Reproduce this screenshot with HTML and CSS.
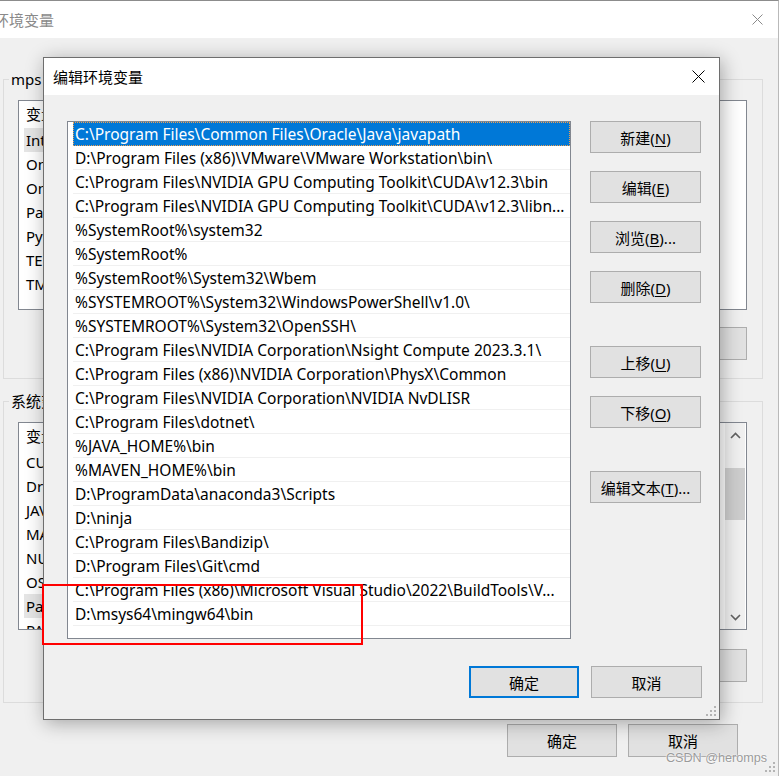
FILE: index.html
```html
<!DOCTYPE html>
<html lang="zh-CN">
<head>
<meta charset="utf-8">
<title>编辑环境变量</title>
<link rel="stylesheet" href="styles.css">
</head>
<body>
<div class="bgwin">
  <div class="bg-title">
    <span class="bg-title-text">环境变量</span>
    <svg class="bg-close" width="11" height="11" viewBox="0 0 11 11"><path d="M0.5 0.5 L10.5 10.5 M10.5 0.5 L0.5 10.5" stroke="#8a8a8a" stroke-width="1" fill="none"/></svg>
  </div>
  <div class="bg-body">
    <fieldset class="group">
      <legend>mps 的用户变量(U)</legend>
      <div class="vlist v1">
        <div class="vhead">变量</div>
        <div class="vrow hl">IntelliJ IDEA</div>
        <div class="vrow">OneDrive</div>
        <div class="vrow">OneDriveConsumer</div>
        <div class="vrow">Path</div>
        <div class="vrow">PyCharm</div>
        <div class="vrow">TEMP</div>
        <div class="vrow">TMP</div>
      </div>
      <div class="group-btns">
        <button class="btn gbtn">新建(N)...</button>
        <button class="btn gbtn">编辑(E)...</button>
        <button class="btn gbtn">删除(D)</button>
      </div>
    </fieldset>
    <fieldset class="group g2">
      <legend>系统变量(S)</legend>
      <div class="vlist v2">
        <div class="vcol">
          <div class="vhead">变量</div>
          <div class="vrow">CUDA_PATH</div>
          <div class="vrow">DriverData</div>
          <div class="vrow">JAVA_HOME</div>
          <div class="vrow">MAVEN_HOME</div>
          <div class="vrow">NUMBER_OF_PROCESSORS</div>
          <div class="vrow">OS</div>
          <div class="vrow hl">Path</div>
          <div class="vrow">PATHEXT</div>
        </div>
        <div class="vscroll">
          <svg class="chev" width="11" height="7" viewBox="0 0 11 7"><path d="M1 6 L5.5 1.5 L10 6" stroke="#606060" stroke-width="1.6" fill="none"/></svg>
          <div class="thumb-track"><div class="thumb"></div></div>
          <svg class="chev" width="11" height="7" viewBox="0 0 11 7"><path d="M1 1 L5.5 5.5 L10 1" stroke="#606060" stroke-width="1.6" fill="none"/></svg>
        </div>
      </div>
      <div class="group-btns g2btns">
        <button class="btn gbtn">新建(W)...</button>
        <button class="btn gbtn">编辑(I)...</button>
        <button class="btn gbtn">删除(L)</button>
      </div>
    </fieldset>
    <div class="bg-foot">
      <button class="btn fbtn">确定</button>
      <button class="btn fbtn">取消</button>
    </div>
  </div>
  <svg class="grip bg-grip" width="10" height="10" viewBox="0 0 10 10"><g fill="#b4b4b4"><rect x="8" y="0" width="2" height="2"/><rect x="4" y="4" width="2" height="2"/><rect x="8" y="4" width="2" height="2"/><rect x="0" y="8" width="2" height="2"/><rect x="4" y="8" width="2" height="2"/><rect x="8" y="8" width="2" height="2"/></g></svg>
</div>

<div class="dlg">
  <div class="dlg-title">
    <span>编辑环境变量</span>
    <svg class="dlg-close" width="13" height="13" viewBox="0 0 13 13"><path d="M0.5 0.5 L12.5 12.5 M12.5 0.5 L0.5 12.5" stroke="#000" stroke-width="1" fill="none"/></svg>
  </div>
  <div class="dlg-body">
    <div class="plist">
      <div class="prow sel">C:\Program Files\Common Files\Oracle\Java\javapath</div>
      <div class="prow">D:\Program Files (x86)\VMware\VMware Workstation\bin\</div>
      <div class="prow">C:\Program Files\NVIDIA GPU Computing Toolkit\CUDA\v12.3\bin</div>
      <div class="prow">C:\Program Files\NVIDIA GPU Computing Toolkit\CUDA\v12.3\libn...</div>
      <div class="prow">%SystemRoot%\system32</div>
      <div class="prow">%SystemRoot%</div>
      <div class="prow">%SystemRoot%\System32\Wbem</div>
      <div class="prow">%SYSTEMROOT%\System32\WindowsPowerShell\v1.0\</div>
      <div class="prow">%SYSTEMROOT%\System32\OpenSSH\</div>
      <div class="prow">C:\Program Files\NVIDIA Corporation\Nsight Compute 2023.3.1\</div>
      <div class="prow">C:\Program Files (x86)\NVIDIA Corporation\PhysX\Common</div>
      <div class="prow">C:\Program Files\NVIDIA Corporation\NVIDIA NvDLISR</div>
      <div class="prow">C:\Program Files\dotnet\</div>
      <div class="prow">%JAVA_HOME%\bin</div>
      <div class="prow">%MAVEN_HOME%\bin</div>
      <div class="prow">D:\ProgramData\anaconda3\Scripts</div>
      <div class="prow">D:\ninja</div>
      <div class="prow">C:\Program Files\Bandizip\</div>
      <div class="prow">D:\Program Files\Git\cmd</div>
      <div class="prow">C:\Program Files (x86)\Microsoft Visual Studio\2022\BuildTools\V...</div>
      <div class="prow">D:\msys64\mingw64\bin</div>
    </div>
    <div class="pbtns">
      <button class="btn pbtn">新建(<u>N</u>)</button>
      <button class="btn pbtn">编辑(<u>E</u>)</button>
      <button class="btn pbtn">浏览(<u>B</u>)...</button>
      <button class="btn pbtn">删除(<u>D</u>)</button>
      <button class="btn pbtn sep">上移(<u>U</u>)</button>
      <button class="btn pbtn">下移(<u>O</u>)</button>
      <button class="btn pbtn sep">编辑文本(<u>T</u>)...</button>
    </div>
  </div>
  <div class="dlg-foot">
    <button class="btn dbtn ok">确定</button>
    <button class="btn dbtn">取消</button>
  </div>
  <svg class="grip dlg-grip" width="10" height="10" viewBox="0 0 10 10"><g fill="#b4b4b4"><rect x="8" y="0" width="2" height="2"/><rect x="4" y="4" width="2" height="2"/><rect x="8" y="4" width="2" height="2"/><rect x="0" y="8" width="2" height="2"/><rect x="4" y="8" width="2" height="2"/><rect x="8" y="8" width="2" height="2"/></g></svg>
</div>

<div class="redbox"></div>
<div class="watermark">CSDN @heromps</div>
</body>
</html>
```

FILE: styles.css
```css
html, body {
  margin: 0;
  padding: 0;
}
body {
  width: 779px;
  height: 776px;
  overflow: hidden;
  position: relative;
  font-family: "Noto Sans", "Noto Sans CJK SC", sans-serif;
  font-size: 15px;
  color: #000;
  background: #f0f0f0;
}

/* ---------- background window ---------- */
.bgwin {
  width: 779px;
  height: 776px;
  box-sizing: border-box;
  border-top: 1px solid #8c8c8c;
  border-right: 1px solid #b9b9b9;
  background: #f0f0f0;
  display: flex;
  flex-direction: column;
  position: relative;
}
.bg-title {
  height: 37px;
  flex: none;
  background: #fff;
  display: flex;
  align-items: center;
  justify-content: space-between;
}
.bg-title-text {
  margin-left: -6px;
  color: #8a8a8a;
  font-size: 15px;
}
.bg-close {
  margin-right: 15px;
}
.bg-body {
  flex: 1;
  padding: 31px 15px 0 3px;
}
.group {
  margin: 0;
  border: 1px solid #dcdcdc;
  padding: 11px 14px 18px 14px;
  min-width: 0;
}
.group legend {
  margin-left: -9px;
  padding: 0 2px;
  font-size: 15px;
  line-height: 20px;
}
.g2 {
  margin-top: 12px;
  padding-bottom: 20px;
}
.vlist {
  box-sizing: border-box;
  border: 1px solid #828790;
  background: #fff;
  overflow: hidden;
  margin-right: 1px;
}
.v1 {
  height: 210px;
}
.v2 {
  height: 208px;
  display: flex;
}
.vcol {
  flex: 1;
}
.vhead {
  height: 27px;
  line-height: 27px;
  padding-left: 7px;
}
.vrow {
  height: 24px;
  line-height: 24px;
  margin-left: 5px;
  padding-left: 2px;
  width: 220px;
}
.vrow.hl {
  background: #e5e5e5;
}
.vscroll {
  width: 20px;
  margin-right: 1px;
  background: #f0f0f0;
  display: flex;
  flex-direction: column;
  align-items: center;
}
.chev {
  margin: 9px 0 8px;
  flex: none;
}
.thumb-track {
  flex: 1;
  align-self: stretch;
}
.thumb {
  margin-top: 21px;
  height: 52px;
  background: #cdcdcd;
}
.group-btns {
  display: flex;
  justify-content: flex-end;
  gap: 10px;
  margin-top: 17px;
  margin-right: 1px;
}
.g2btns {
  margin-top: 19px;
}
.btn {
  box-sizing: border-box;
  border: 1px solid #adadad;
  background: #e1e1e1;
  font-family: "Noto Sans", "Noto Sans CJK SC", sans-serif;
  font-size: 15px;
  color: #000;
  padding: 0;
  margin: 0;
}
.btn u {
  text-decoration-thickness: 1px;
  text-underline-offset: 2px;
}
.gbtn {
  width: 124px;
  height: 33px;
}
.bg-foot {
  display: flex;
  justify-content: flex-end;
  gap: 11px;
  margin-top: 21px;
  padding-right: 25px;
}
.fbtn {
  width: 110px;
  height: 33px;
}
.grip {
  position: absolute;
}
.bg-grip {
  right: 3px;
  bottom: 4px;
}

/* ---------- dialog ---------- */
.dlg {
  position: absolute;
  left: 43px;
  top: 57px;
  width: 677px;
  height: 663px;
  box-sizing: border-box;
  border: 1px solid #6e6e6e;
  background: #f0f0f0;
  box-shadow: 2px 3px 18px rgba(0, 0, 0, 0.32);
  display: flex;
  flex-direction: column;
}
.dlg-title {
  height: 37px;
  flex: none;
  background: #fff;
  display: flex;
  align-items: center;
  justify-content: space-between;
  padding-left: 9px;
  padding-right: 14px;
  font-size: 15px;
}
.dlg-body {
  padding: 26px 18px 0 23px;
  display: grid;
  grid-template-columns: 504px 111px;
  column-gap: 19px;
  align-items: start;
}
.plist {
  height: 518px;
  box-sizing: border-box;
  border: 1px solid #828790;
  background: #fff;
  padding-left: 5px;
  overflow: hidden;
}
.prow {
  height: 24px;
  box-sizing: border-box;
  border-bottom: 1px solid #f0f0f0;
  line-height: 24px;
  padding-left: 2px;
  white-space: nowrap;
  overflow: hidden;
  font-size: 15.5px;
}
.prow.sel {
  background: #0078d7;
  color: #fff;
  border-bottom-color: #0078d7;
  outline: 1px dotted #f0a050;
  outline-offset: -1px;
}
.pbtns {
  display: flex;
  flex-direction: column;
  gap: 18px;
}
.pbtn {
  height: 32px;
  width: 111px;
}
.pbtn.sep {
  margin-top: 25px;
}
.dlg-foot {
  display: flex;
  justify-content: flex-end;
  gap: 12px;
  padding-right: 17px;
  margin-top: 27px;
}
.dbtn {
  width: 111px;
  height: 32px;
}
.dbtn.ok {
  width: 110px;
  border: 2px solid #0078d7;
}
.dlg-grip {
  right: 3px;
  bottom: 3px;
}

/* ---------- overlays ---------- */
.redbox {
  position: absolute;
  left: 42px;
  top: 584px;
  width: 321px;
  height: 61px;
  box-sizing: border-box;
  border: 2px solid #ff0000;
}
.watermark {
  position: absolute;
  left: 666px;
  top: 751px;
  white-space: nowrap;
  font-family: "Liberation Sans", Arial, sans-serif;
  font-size: 12.6px;
  color: #9a9a9a;
  text-shadow: 0 0 2px #fff, 0 0 1px #fff;
}
```
